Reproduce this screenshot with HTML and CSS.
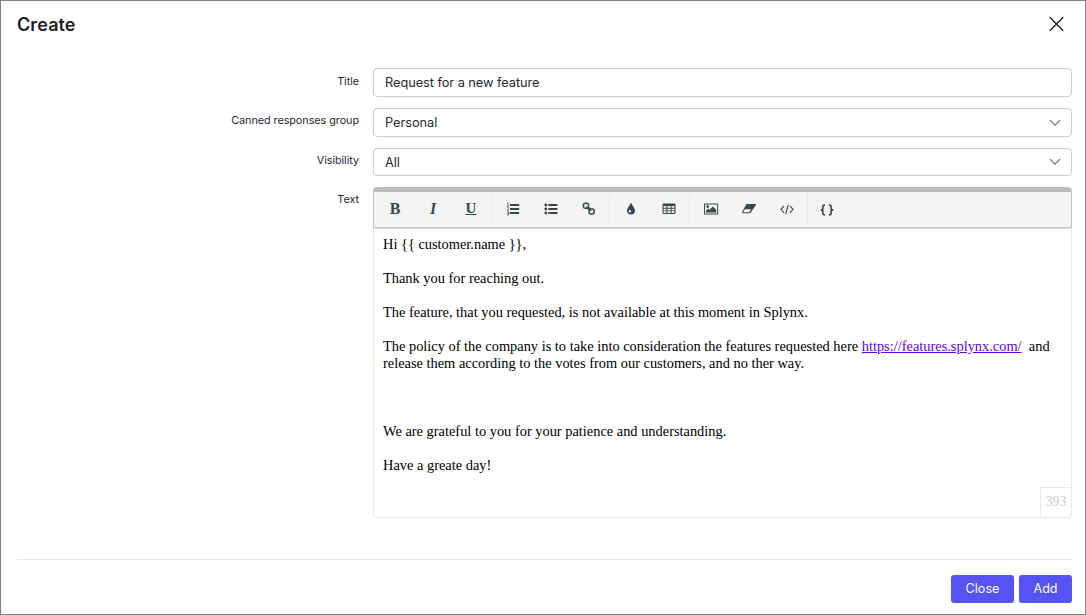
FILE: index.html
```html
<!DOCTYPE html>
<html lang="en">
<head>
<meta charset="utf-8">
<title>Create</title>
<link rel="stylesheet" href="styles.css">
</head>
<body>
<div class="modal">
  <header class="modal-header">
    <h1 class="modal-title">Create</h1>
    <button class="close" aria-label="Close dialog"><svg width="16" height="16" viewBox="0 0 16 16"><path d="M.8 1.3L14.2 14.7M14.2 1.3L.8 14.7"/></svg></button>
  </header>
  <main class="form">
    <div class="row">
      <label class="label">Title</label>
      <div class="field">Request for a new feature</div>
    </div>
    <div class="row">
      <label class="label label-high">Canned responses group</label>
      <div class="field">Personal<svg class="chevron" width="12" height="8" viewBox="0 0 12 8"><path d="M1 1.2L6 6.2L11 1.2"/></svg></div>
    </div>
    <div class="row">
      <label class="label label-high">Visibility</label>
      <div class="field field-short">All<svg class="chevron" width="12" height="8" viewBox="0 0 12 8"><path d="M1 1.2L6 6.2L11 1.2"/></svg></div>
    </div>
    <div class="row">
      <label class="label label-high">Text</label>
      <div class="editor">
        <div class="toolbar">
          <button class="tool serif">B</button>
          <button class="tool serif italic">I</button>
          <button class="tool serif underlined">U</button>
          <span class="separator"></span>
          <button class="tool"><svg width="14" height="14" viewBox="0 0 14 14"><path d="M4 2h9.2v1.9H4zM4 6h9.2v1.9H4zM4 10h9.2v1.9H4z"/><path class="thin" d="M1 1.3l1-.6v3.2M.8 3.9h2.4M.9 5.6h1.9v.8L1 8h2M1 9.6h1.8v1.6H1.5h1.3v1.7H.8"/></svg></button>
          <button class="tool"><svg width="14" height="14" viewBox="0 0 14 14"><path d="M4.3 2h9.2v1.9H4.3zM4.3 6h9.2v1.9H4.3zM4.3 10h9.2v1.9H4.3z"/><circle cx="1.8" cy="3" r="1.4"/><circle cx="1.8" cy="7" r="1.4"/><circle cx="1.8" cy="11" r="1.4"/></svg></button>
          <button class="tool"><svg width="14" height="14" viewBox="0 0 14 14"><g class="ring"><rect x="1.4" y="1.3" width="5.2" height="5" rx="2"/><rect x="7" y="7" width="5.2" height="5" rx="2"/><path d="M4.4 4.6L6.4 7.2L7.4 6.4L9.2 8.8"/></g></svg></button>
          <span class="separator"></span>
          <button class="tool"><svg width="14" height="14" viewBox="0 0 14 14"><path fill-rule="evenodd" d="M7 1C6.6 1 6.5 1.3 6.4 1.6C5.8 4 3 6 3 8.6a4 3.9 0 0 0 8 0C11 6 8.2 4 7.6 1.6C7.5 1.3 7.4 1 7 1zM5.6 7.7C5.3 8.3 4.8 8.7 4.8 9.4a1.1 1.1 0 0 0 2.2 0C7 8.7 6.4 8.3 6.1 7.7C6 7.4 5.7 7.4 5.6 7.7z"/></svg></button>
          <button class="tool"><svg width="14" height="14" viewBox="0 0 14 14"><path fill-rule="evenodd" d="M1.6 1.6h10.8Q13.5 1.6 13.5 2.7v8.1q0 1.2-1.1 1.2H1.6Q.5 12 .5 10.8V2.7Q.5 1.6 1.6 1.6zM1.6 4v1.8h2.8V4zM5.4 4v1.8h3.2V4zM9.6 4v1.8h2.8V4zM1.6 6.7v1.7h2.8V6.7zM5.4 6.7v1.7h3.2V6.7zM9.6 6.7v1.7h2.8V6.7zM1.6 9.3V11h2.8V9.3zM5.4 9.3V11h3.2V9.3zM9.6 9.3V11h2.8V9.3z"/></svg></button>
          <span class="separator"></span>
          <button class="tool"><svg width="16" height="14" viewBox="0 0 16 14"><path fill-rule="evenodd" d="M2 1.5h12.2q1 0 1 1v9q0 1-1 1H2q-1 0-1-1v-9q0-1 1-1zM2 2.5v9h12.2v-9z"/><circle cx="4.6" cy="4.6" r="1.4"/><path d="M3 10.5V8.7L5.2 6.6L6.5 7.9L9.9 4.5L13.2 7.8V10.5z"/></svg></button>
          <button class="tool"><svg width="16" height="14" viewBox="0 0 16 14"><path fill-rule="evenodd" d="M6.1 2h8q1.2 0 .8 1.1L9.8 10.6Q9.4 11.2 8.6 11.2H1.8Q.7 11.2 1.1 10.1L5 2.7Q5.3 2 6.1 2zM3.8 7.2L2.1 10.2H8.3L10.2 7.2z"/></svg></button>
          <button class="tool"><svg width="16" height="14" viewBox="0 0 16 14"><path class="code" d="M5.1 3.8L2 7.3L5.1 10.8M10.9 3.8L14 7.3L10.9 10.8M9.2 2.6L6.8 12"/></svg></button>
          <span class="separator"></span>
          <button class="tool braces"><svg width="14" height="14" viewBox="0 0 14 14"><path d="M5 2.1H4.4Q2.9 2.1 2.9 3.5V5.4Q2.9 6.9.7 6.9Q2.9 6.9 2.9 8.4V10.6Q2.9 11.9 4.4 11.9H5M9 2.1h.6Q11.1 2.1 11.1 3.5V5.4Q11.1 6.9 13.3 6.9Q11.1 6.9 11.1 8.4V10.6Q11.1 11.9 9.6 11.9H9"/></svg></button>
        </div>
        <div class="content">
          <p>Hi {{ customer.name }},</p>
          <p>Thank you for reaching out.</p>
          <p>The feature, that you requested, is not available at this moment in Splynx.</p>
          <p>The policy of the company is to take into consideration the features requested here <a class="link" href="#">https://features.splynx.com/</a>&nbsp; and release them according to the votes from our customers, and no ther way.</p>
          <p><br></p>
          <p>We are grateful to you for your patience and understanding.</p>
          <p>Have a greate day!</p>
          <span class="counter">393</span>
        </div>
      </div>
    </div>
  </main>
  <footer class="modal-footer">
    <button class="btn">Close</button>
    <button class="btn btn-add">Add</button>
  </footer>
</div>
</body>
</html>
```
FILE: styles.css
```css
* { box-sizing: border-box; }
body { margin: 0; background: #fff; font-family: Inter, sans-serif; color: #24292f; }
button { margin: 0; padding: 0; border: 0; background: none; font-family: inherit; }
.modal { height: 615px; border: 1px solid #808080; padding: 0 13px 0 16px; display: flex; flex-direction: column; }
.modal-header { height: 67px; padding-top: 11px; display: flex; justify-content: space-between; align-items: flex-start; }
.modal-title { margin: 0; font-size: 18px; line-height: 25px; font-weight: 600; color: #1c1c26; letter-spacing: .1px; }
.close { width: 16px; height: 16px; margin: 4px 7px 0 0; }
.close svg { display: block; fill: none; stroke: #222; stroke-width: 1.4; }
.form { display: flex; flex-direction: column; gap: 11px; }
.row { display: grid; grid-template-columns: 342px 699px; column-gap: 14px; align-items: start; }
.label { font-size: 10.8px; letter-spacing: -.04px; line-height: 16px; padding-top: 6px; text-align: right; }
.label-high { padding-top: 5px; }
.field { height: 29px; padding: 0 10px 0 11px; border: 1px solid #cbced8; border-radius: 4px; font-size: 12.8px; letter-spacing: -.06px; line-height: 27px; display: flex; align-items: center; justify-content: space-between; }
.field-short { height: 28px; }
.chevron { fill: none; stroke: #666b74; stroke-width: 1.1; }
.editor { height: 331px; display: flex; flex-direction: column; }
.toolbar { height: 41px; flex: none; border: 1px solid #c4c4c4; border-top: 5px solid #bcbcbc; border-radius: 4px 4px 0 0; background: #f4f4f4; padding: 0 2px; display: flex; align-items: center; box-shadow: 0 1px 0 #dedede; }
.tool { width: 38px; height: 34px; padding-bottom: 2px; display: flex; align-items: center; justify-content: center; color: #36474f; }
.tool svg { fill: #36474f; }
.tool .thin { fill: none; stroke: #36474f; stroke-width: .7; }
.tool .ring { fill: none; stroke: #36474f; stroke-width: 1.5; }
.tool .code { fill: none; stroke: #36474f; stroke-width: 1.1; }
.tool.braces { padding: 1px 4px 0 0; }
.braces svg { fill: none; stroke: #36474f; stroke-width: 1.6; }
.serif { font: bold 16px "Liberation Serif", serif; }
.italic { font-style: italic; }
.underlined { text-decoration: underline; font-size: 15px; }
.separator { width: 1px; height: 31px; margin: 0 2px 0 1px; background: #e8e8e8; }
.content { flex: 1; position: relative; border: 1px solid #e8e8e8; border-top: 0; border-radius: 0 0 4px 4px; padding: 8px 9px 0; font: 14.4px/17px "Liberation Serif", serif; color: #000; }
.content p { margin: 0 0 17px; }
.link { color: #6200ee; }
.counter { position: absolute; right: 0; bottom: 0; width: 31px; height: 30px; border: 1px solid #e8e8e8; border-width: 1px 0 0 1px; color: #ccc; font-size: 13.6px; line-height: 28px; text-align: center; }
.modal-footer { margin-top: 41px; border-top: 1px solid #e8e8ea; padding-top: 15px; display: flex; justify-content: flex-end; gap: 5px; }
.btn { width: 63px; height: 28px; padding-bottom: 1px; border-radius: 3px; background: #5553f5; color: #fff; font-size: 12.6px; }
.btn-add { width: 53px; }
```
